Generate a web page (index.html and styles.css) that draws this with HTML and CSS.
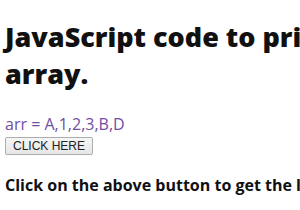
FILE: index.html
```html
<!DOCTYPE html>
<html lang="en">
<head>
    <meta charset="UTF-8">
    <title>Print array</title>
    <link rel="stylesheet" href="styles.css">
</head>
<body>

    <h1>JavaScript code to print elements of an array.</h1>
    <p class="arr">arr = A,1,2,3,B,D</p>
    <button class="click-btn">CLICK HERE</button>
    <h3 class="result">Click on the above button to get the length of the array</h3>

</body>
</html>
```

FILE: styles.css
```css
html, body {
    overflow: hidden;
}
body {
    font-family: "Open Sans", "Noto Sans", sans-serif;
    margin: 0;
    padding: 0 5px;
    width: 620px;
    color: #111;
}
h1 {
    font-size: 27px;
    font-weight: 800;
    line-height: 37px;
    margin: 18px 0 0;
    width: 560px;
}
.arr {
    color: #704f9f;
    font-size: 16px;
    margin: 23px 0 0;
    line-height: 18px;
}
.click-btn {
    font-family: "Liberation Sans", Arial, sans-serif;
    font-size: 12px;
    padding: 1px 7px;
    background: linear-gradient(#f6f6f6, #e6e6e6);
    border: 1px solid #adadad;
    border-radius: 2px;
    color: #222;
}
.result {
    font-size: 16px;
    font-weight: 700;
    margin: 19px 0 0;
}
```
